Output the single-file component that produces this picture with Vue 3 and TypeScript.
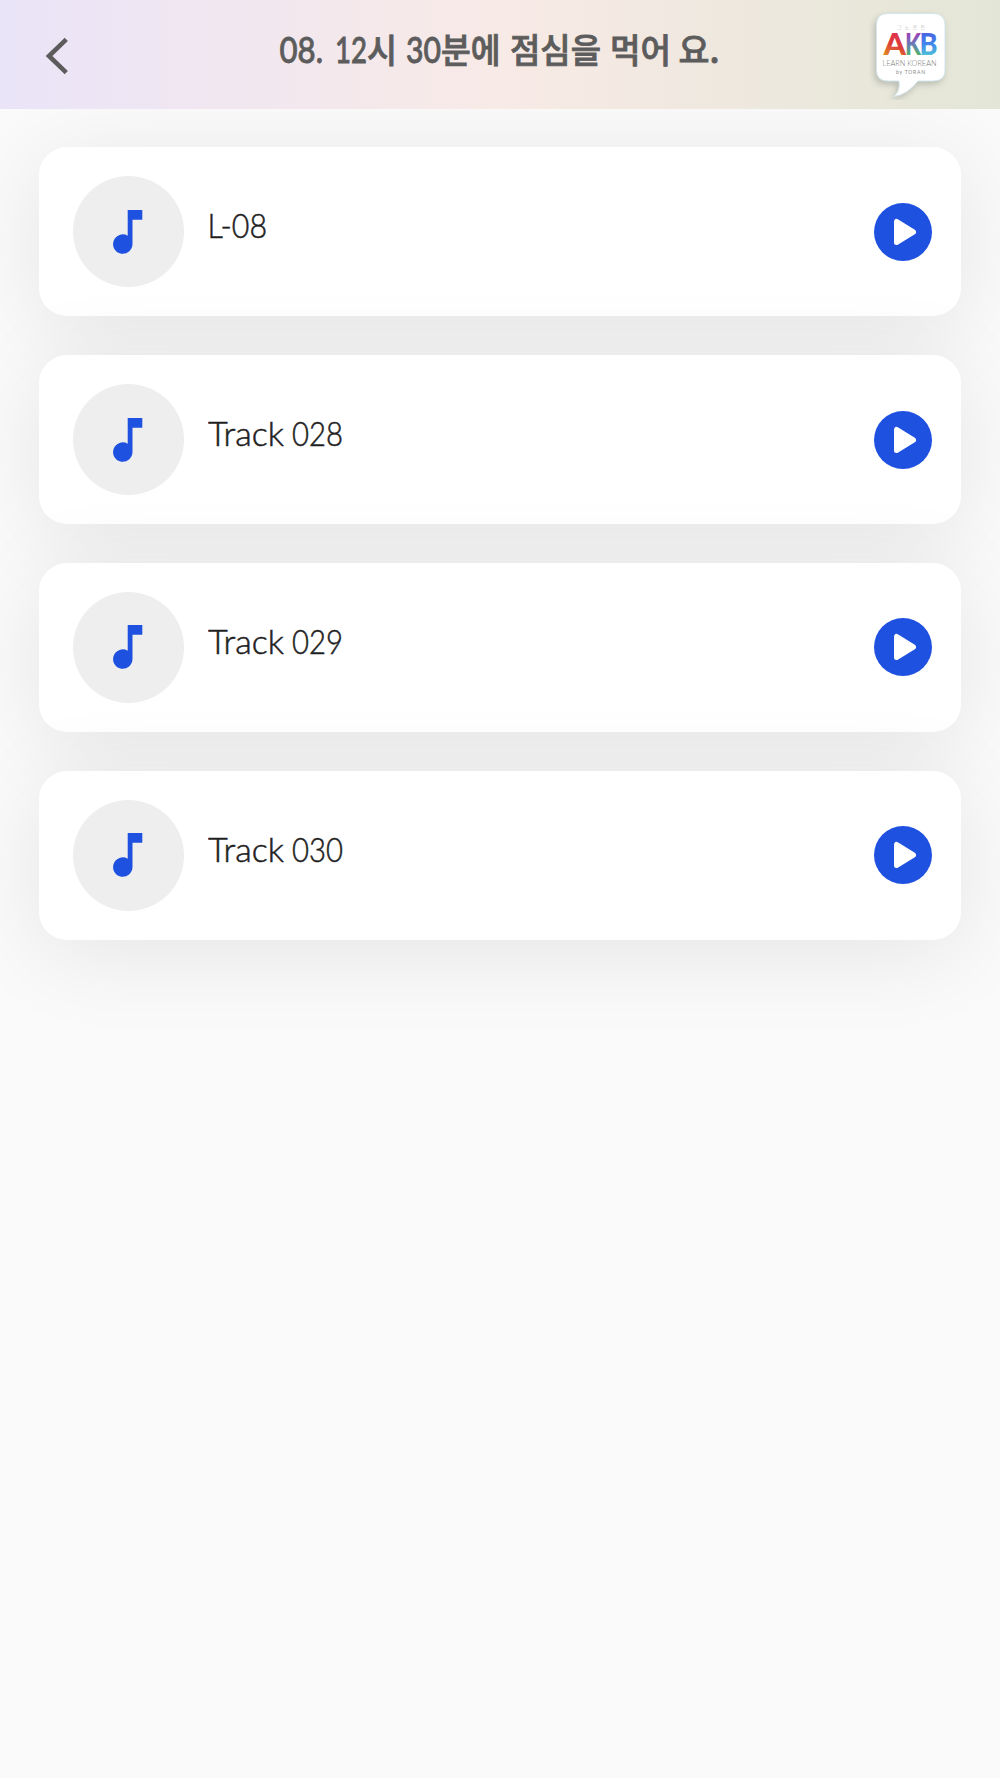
<script setup lang="ts">
interface Word {
  text: string
  x: number
  width: number
  korean?: boolean
}

interface Track {
  id: number
  words: Word[]
}

const title: Word[] = [
  { text: '08.', x: 8.5, width: 43.5 },
  { text: '12', x: 64, width: 32 },
  { text: '시', x: 96, width: 30, korean: true },
  { text: '30', x: 135, width: 35 },
  { text: '분에', x: 170, width: 59.5, korean: true },
  { text: '점심을', x: 239, width: 91, korean: true },
  { text: '먹어', x: 339, width: 61, korean: true },
  { text: '요.', x: 407.5, width: 41, korean: true },
]

const trackWords = (digits: string): Word[] => [
  { text: 'Track', x: 0, width: 76 },
  { text: digits, x: 84, width: 51 },
]

const tracks: Track[] = [
  { id: 1, words: [{ text: 'L-08', x: -0.5, width: 59.5 }] },
  { id: 2, words: trackWords('028') },
  { id: 3, words: trackWords('029') },
  { id: 4, words: trackWords('030') },
]
</script>

<template>
  <div class="screen">
    <header class="bar">
      <button class="back" aria-label="Back">
        <svg width="24" height="38" viewBox="0 0 24 38">
          <path d="M21.300 2.300 L4 19 L21.300 35.700" fill="none" stroke="#5c5c5c" stroke-width="4.600" />
        </svg>
      </button>
      <h1 class="title">
        <svg width="458" height="60" viewBox="0 0 458 60">
          <text
            v-for="word in title"
            :key="word.x"
            :x="word.x"
            y="43"
            :class="{ korean: word.korean }"
            :textLength="word.width"
            lengthAdjust="spacingAndGlyphs"
          >{{ word.text }}</text>
        </svg>
      </h1>
      <svg class="logo" width="90" height="100" viewBox="0 0 90 100">
        <defs>
          <linearGradient id="red" x1="28" y1="33" x2="19" y2="56" gradientUnits="userSpaceOnUse">
            <stop offset="0" stop-color="#e0324f" />
            <stop offset=".5" stop-color="#dc3d38" />
            <stop offset="1" stop-color="#e08a25" />
          </linearGradient>
          <linearGradient id="green" x1="0" y1="33" x2="0" y2="55" gradientUnits="userSpaceOnUse">
            <stop offset="0" stop-color="#a03fb5" />
            <stop offset=".5" stop-color="#6a7bb8" />
            <stop offset="1" stop-color="#4cb56e" />
          </linearGradient>
          <linearGradient id="blue" x1="0" y1="33" x2="0" y2="55" gradientUnits="userSpaceOnUse">
            <stop offset="0" stop-color="#4a63e2" />
            <stop offset=".5" stop-color="#3f86ec" />
            <stop offset="1" stop-color="#50bfd8" />
          </linearGradient>
        </defs>
        <path
          class="bubble"
          d="M19 13.500 H64 Q76 13.500 76 25 V70 Q76 81 64 81 H49 Q38 95 25 96.500 Q31.500 91 30 81 H19 Q7.500 81 7.500 70 V25 Q7.500 13.500 19 13.500 Z"
        />
        <text class="tiny" x="28" y="28.500" textLength="28">그노르트</text>
        <g class="akb">
          <text x="14.500" y="55" textLength="22.500" lengthAdjust="spacingAndGlyphs" fill="url(#red)">A</text>
          <text x="36" y="55" textLength="16" lengthAdjust="spacingAndGlyphs" fill="url(#green)">K</text>
          <text x="50.500" y="55" textLength="18" lengthAdjust="spacingAndGlyphs" fill="url(#blue)">B</text>
        </g>
        <text class="learn" x="13.500" y="65.500" textLength="54" lengthAdjust="spacingAndGlyphs">LEARN KOREAN</text>
        <text class="by" x="27" y="74" textLength="29">by TORAN</text>
      </svg>
    </header>

    <main class="list">
      <article v-for="track in tracks" :key="track.id" class="card">
        <div class="disc">
          <svg width="30" height="44" viewBox="0 0 30 44">
            <path
              fill="#1f51e0"
              d="M14.700 0 H29.300 V9.700 H19.500 V34 A9.700 9.700 0 1 1 14.700 25.700 Z"
            />
          </svg>
        </div>
        <svg class="name" width="180" height="44" viewBox="0 0 180 44">
          <text
            v-for="word in track.words"
            :key="word.x"
            :x="word.x"
            y="34"
            :textLength="word.width"
            lengthAdjust="spacingAndGlyphs"
          >{{ word.text }}</text>
        </svg>
        <button class="play" aria-label="Play">
          <svg width="58" height="58" viewBox="0 0 58 58">
            <circle cx="29" cy="29" r="29" fill="#1f51e0" />
            <path
              d="M22.500 18.500 V39.500 L39.500 29 Z"
              fill="#fff"
              stroke="#fff"
              stroke-width="5"
              stroke-linejoin="round"
            />
          </svg>
        </button>
      </article>
    </main>
  </div>
</template>

<style>
body {
  background: #fafafa;
}
</style>

<style scoped>
.screen {
  height: 1778px;
  overflow: hidden;
  background: #fafafa;
  font-family: Lato, "Noto Sans CJK KR", sans-serif;
}
.bar {
  position: relative;
  z-index: 1;
  display: flex;
  align-items: flex-start;
  box-sizing: border-box;
  height: 108.500px;
  padding-left: 45px;
  background: linear-gradient(90deg, #eae4f8 0%, #f8eae6 50%, #e3e6d6 100%);
}
button {
  padding: 0;
  border: 0;
  background: none;
}
svg {
  display: block;
}
.back {
  margin-top: 37px;
}
.title {
  margin: 20px 0 0 202px;
  font-size: 36px;
  font-weight: 700;
}
.title text {
  fill: #5c5c5c;
  stroke: #5c5c5c;
  stroke-width: 0.8;
  font: 500 36px Lato, sans-serif;
}
.title .korean {
  font: 500 34px "Noto Sans CJK KR", sans-serif;
}
.logo {
  margin-left: 140px;
}
.bubble {
  fill: #fff;
  stroke: #d3e6ee;
  stroke-width: 1;
  filter: drop-shadow(-2px 3px 3px rgba(70, 80, 80, 0.28));
}
.tiny {
  fill: #aaa;
  font: 300 5px "Noto Sans CJK KR", sans-serif;
}
.akb {
  font: 900 30px Lato, sans-serif;
}
.learn {
  fill: #777;
  font: 300 8px Lato, sans-serif;
}
.by {
  fill: #888;
  font: 400 5px Lato, sans-serif;
}
.list {
  display: flex;
  flex-direction: column;
  gap: 38.800px;
  padding: 38.800px 39px 0;
}
.card {
  display: flex;
  align-items: center;
  box-sizing: border-box;
  height: 169px;
  padding: 0 29px 0 33.500px;
  border-radius: 28px;
  background: #fff;
  box-shadow: 0 14px 90px rgba(0, 0, 0, 0.085);
}
.disc {
  display: flex;
  align-items: center;
  justify-content: center;
  width: 111px;
  height: 111px;
  border-radius: 50%;
  background: #eee;
}
.name {
  margin: -11px 0 0 24.500px;
}
.name text {
  fill: #1e1e1e;
  stroke: #1e1e1e;
  stroke-width: 0.500;
  font: 300 32.500px Lato, sans-serif;
}
.play {
  margin-left: auto;
}
</style>
